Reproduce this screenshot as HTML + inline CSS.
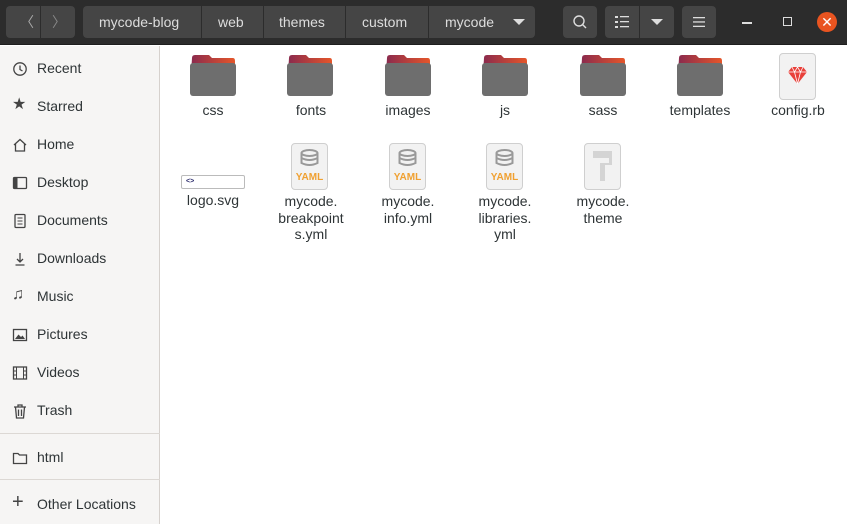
<!DOCTYPE html>
<html><head><style>
*{margin:0;padding:0;box-sizing:border-box}
body{width:847px;height:524px;overflow:hidden;font-family:"Liberation Sans",sans-serif;background:#fff;position:relative;font-size:14px;color:#2e3436}
.hdr{position:absolute;left:0;top:0;width:847px;height:45px;background:#2c2c2c;border-bottom:1px solid #1e1e1e}
.btn{position:absolute;top:6px;height:32px;background:#454545;border-radius:4px;color:#ddd;font-size:14px;line-height:32px;text-align:center}
.seg{position:absolute;top:0;height:32px;border-left:1px solid #2c2c2c}
.side{position:absolute;left:0;top:46px;width:160px;height:478px;background:#f6f5f4;border-right:1px solid #d6d1cd}
.si{position:absolute;left:37px;font-size:14px;color:#2e3436}
.ic{position:absolute;left:12px;width:16px;height:16px}
.sep{position:absolute;left:0;width:160px;height:1px;background:#dcd8d4}
.it{position:absolute;width:96px;text-align:center;font-size:14px;line-height:16.5px;color:#2e3436}
.fold{position:absolute;width:46px;height:42px}
.doc{position:absolute;width:37px;height:47px;border:1px solid #cfcfcf;border-radius:4px;background:#f2f2f2}
</style></head><body>
<div class="hdr">
 <div class="btn" style="left:6px;width:69px"><span style="position:absolute;left:14px;color:#aaa">〈</span><div class="seg" style="left:34px"></div><span style="position:absolute;left:46px;color:#888">〉</span></div>
 <div class="btn" style="left:83px;width:452px">
  <span style="position:absolute;left:16px">mycode-blog</span>
  <div class="seg" style="left:118px"></div><span style="position:absolute;left:135px">web</span>
  <div class="seg" style="left:180px"></div><span style="position:absolute;left:196px">themes</span>
  <div class="seg" style="left:262px"></div><span style="position:absolute;left:279px">custom</span>
  <div class="seg" style="left:345px"></div><span style="position:absolute;left:362px">mycode</span>
  <span style="position:absolute;left:430px;top:13px;width:0;height:0;border-left:6px solid transparent;border-right:6px solid transparent;border-top:6px solid #ddd"></span>
 </div>
 <div class="btn" style="left:563px;width:34px"><svg width="16" height="16" style="margin-top:8px" viewBox="0 0 16 16"><circle cx="7" cy="7" r="5" fill="none" stroke="#ddd" stroke-width="1.4"/><line x1="10.5" y1="10.5" x2="14" y2="14" stroke="#ddd" stroke-width="1.4"/></svg></div>
 <div class="btn" style="left:605px;width:69px"><svg width="14" height="12" style="position:absolute;left:10px;top:10px" viewBox="0 0 14 12"><g fill="#ddd"><rect x="0" y="0" width="3" height="2"/><rect x="0" y="5" width="3" height="2"/><rect x="0" y="10" width="3" height="2"/><rect x="5" y="0" width="9" height="1.3"/><rect x="5" y="5" width="9" height="1.3"/><rect x="5" y="10" width="9" height="1.3"/></g></svg><div class="seg" style="left:34px"></div><span style="position:absolute;left:46px;top:13px;width:0;height:0;border-left:6px solid transparent;border-right:6px solid transparent;border-top:6px solid #ddd"></span></div>
 <div class="btn" style="left:682px;width:34px"><svg width="12" height="10" style="margin-top:11px" viewBox="0 0 12 10"><g fill="#ddd"><rect y="0" width="12" height="1.3"/><rect y="4.3" width="12" height="1.3"/><rect y="8.7" width="12" height="1.3"/></g></svg></div>
 <div style="position:absolute;left:742px;top:22px;width:10px;height:1.5px;background:#ddd"></div>
 <div style="position:absolute;left:783px;top:17px;width:9px;height:9px;border:1.3px solid #ddd"></div>
 <div style="position:absolute;left:817px;top:12px;width:20px;height:20px;border-radius:50%;background:#e95420;color:#fff;text-align:center;line-height:20px;font-size:14px">✕</div>
</div>
<div class="side">
 <svg class="ic" style="top:15px" viewBox="0 0 16 16"><circle cx="8" cy="8" r="6.2" fill="none" stroke="#444" stroke-width="1.3"/><path d="M8 4.5V8.5L10.5 10" fill="none" stroke="#444" stroke-width="1.3"/></svg><div class="si" style="top:14px">Recent</div>
 <div class="ic" style="top:51px;font-size:16px;line-height:16px;color:#444">★</div><div class="si" style="top:52px">Starred</div>
 <svg class="ic" style="top:91px" viewBox="0 0 16 16"><path d="M2 8L8 2.5L14 8M3.5 7V14H12.5V7" fill="none" stroke="#444" stroke-width="1.3"/></svg><div class="si" style="top:90px">Home</div>
 <svg class="ic" style="top:129px" viewBox="0 0 16 16"><rect x="1.5" y="2.5" width="13" height="11" rx="1" fill="none" stroke="#444" stroke-width="1.3"/><rect x="1.5" y="2.5" width="4" height="11" fill="#444"/></svg><div class="si" style="top:128px">Desktop</div>
 <svg class="ic" style="top:167px" viewBox="0 0 16 16"><rect x="3" y="1.5" width="10" height="13" rx="1" fill="none" stroke="#444" stroke-width="1.3"/><path d="M5.5 5h5M5.5 8h5M5.5 11h5" stroke="#444"/></svg><div class="si" style="top:166px">Documents</div>
 <svg class="ic" style="top:205px" viewBox="0 0 16 16"><path d="M8 2V11M5 8L8 11L11 8M3.5 14H12.5" fill="none" stroke="#444" stroke-width="1.3"/></svg><div class="si" style="top:204px">Downloads</div>
 <div class="ic" style="top:241px;font-size:16px;line-height:16px;color:#444">♫</div><div class="si" style="top:242px">Music</div>
 <svg class="ic" style="top:281px" viewBox="0 0 16 16"><rect x="1.5" y="2.5" width="13" height="11" fill="none" stroke="#444" stroke-width="1.3"/><path d="M3 12L6.5 7.5L9 10L10.5 8.5L13 12Z" fill="#444"/></svg><div class="si" style="top:280px">Pictures</div>
 <svg class="ic" style="top:319px" viewBox="0 0 16 16"><rect x="1.5" y="2" width="13" height="12" fill="none" stroke="#444" stroke-width="1.3"/><path d="M4.5 2V14M11.5 2V14M1.5 6h3M1.5 10h3M11.5 6h3M11.5 10h3" stroke="#444"/></svg><div class="si" style="top:318px">Videos</div>
 <svg class="ic" style="top:357px" viewBox="0 0 16 16"><path d="M2 4H14M6 4V2H10V4M3.5 4L4.5 15H11.5L12.5 4M6.5 6.5V13M9.5 6.5V13" fill="none" stroke="#444" stroke-width="1.3"/></svg><div class="si" style="top:356px">Trash</div>
 <div class="sep" style="top:387px"></div>
 <svg class="ic" style="top:404px" viewBox="0 0 16 16"><path d="M1.5 3.5H6L7.5 5H14.5V13.5H1.5Z" fill="none" stroke="#444" stroke-width="1.3"/></svg><div class="si" style="top:403px">html</div>
 <div class="sep" style="top:433px"></div>
 <div class="ic" style="top:448px;font-size:20px;line-height:16px;color:#444">+</div><div class="si" style="top:450px">Other Locations</div>
</div>
<svg width="0" height="0" style="position:absolute"><defs><linearGradient id="g" x1="0" x2="1"><stop offset="0" stop-color="#8a2a4e"/><stop offset="1" stop-color="#e5562a"/></linearGradient></defs></svg>
<!-- folders -->
<div id="f"></div>
<script></script>
<svg class="fold" style="left:190px;top:54px" viewBox="0 0 46 42"><path d="M2 4Q2 1 5 1H19L22 4H43Q45 4 45 7V20H1Z" fill="url(#g)"/><rect x="0" y="9" width="46" height="33" rx="3" fill="#6e6e6e"/></svg>
<svg class="fold" style="left:287px;top:54px" viewBox="0 0 46 42"><path d="M2 4Q2 1 5 1H19L22 4H43Q45 4 45 7V20H1Z" fill="url(#g)"/><rect x="0" y="9" width="46" height="33" rx="3" fill="#6e6e6e"/></svg>
<svg class="fold" style="left:385px;top:54px" viewBox="0 0 46 42"><path d="M2 4Q2 1 5 1H19L22 4H43Q45 4 45 7V20H1Z" fill="url(#g)"/><rect x="0" y="9" width="46" height="33" rx="3" fill="#6e6e6e"/></svg>
<svg class="fold" style="left:482px;top:54px" viewBox="0 0 46 42"><path d="M2 4Q2 1 5 1H19L22 4H43Q45 4 45 7V20H1Z" fill="url(#g)"/><rect x="0" y="9" width="46" height="33" rx="3" fill="#6e6e6e"/></svg>
<svg class="fold" style="left:580px;top:54px" viewBox="0 0 46 42"><path d="M2 4Q2 1 5 1H19L22 4H43Q45 4 45 7V20H1Z" fill="url(#g)"/><rect x="0" y="9" width="46" height="33" rx="3" fill="#6e6e6e"/></svg>
<svg class="fold" style="left:677px;top:54px" viewBox="0 0 46 42"><path d="M2 4Q2 1 5 1H19L22 4H43Q45 4 45 7V20H1Z" fill="url(#g)"/><rect x="0" y="9" width="46" height="33" rx="3" fill="#6e6e6e"/></svg>
<div class="doc" style="left:779px;top:53px"><svg width="35" height="45" viewBox="0 0 35 45"><path d="M8 18L12 13H23L27 18L17.5 30Z" fill="#e8403a"/><path d="M8 18H27M12 13L14.5 18L17.5 30L20.5 18L23 13M14.5 18L17.5 13L20.5 18" fill="none" stroke="#fff" stroke-width="0.8"/></svg></div>
<div class="it" style="left:165px;top:102px">css</div>
<div class="it" style="left:263px;top:102px">fonts</div>
<div class="it" style="left:360px;top:102px">images</div>
<div class="it" style="left:457px;top:102px">js</div>
<div class="it" style="left:555px;top:102px">sass</div>
<div class="it" style="left:652px;top:102px">templates</div>
<div class="it" style="left:750px;top:102px">config.rb</div>
<!-- row 2 -->
<div style="position:absolute;left:181px;top:175px;width:64px;height:14px;border:1px solid #bbb;border-radius:2px;background:#fff;font-size:7px;color:#226;padding-left:4px;line-height:12px;font-weight:bold">&lt;&gt;</div>
<div class="it" style="left:165px;top:192px">logo.svg</div>
<div class="doc" style="left:291px;top:143px"><svg width="35" height="45" viewBox="0 0 35 45"><g fill="none" stroke="#999" stroke-width="2"><ellipse cx="17.5" cy="9" rx="8" ry="3"/><path d="M9.5 9V19Q17.5 23 25.5 19V9M9.5 14Q17.5 18 25.5 14"/></g><text x="17.5" y="36" text-anchor="middle" font-size="10" font-weight="bold" fill="#f0a030" font-family="Liberation Sans">YAML</text></svg></div>
<div class="doc" style="left:389px;top:143px"><svg width="35" height="45" viewBox="0 0 35 45"><g fill="none" stroke="#999" stroke-width="2"><ellipse cx="17.5" cy="9" rx="8" ry="3"/><path d="M9.5 9V19Q17.5 23 25.5 19V9M9.5 14Q17.5 18 25.5 14"/></g><text x="17.5" y="36" text-anchor="middle" font-size="10" font-weight="bold" fill="#f0a030" font-family="Liberation Sans">YAML</text></svg></div>
<div class="doc" style="left:486px;top:143px"><svg width="35" height="45" viewBox="0 0 35 45"><g fill="none" stroke="#999" stroke-width="2"><ellipse cx="17.5" cy="9" rx="8" ry="3"/><path d="M9.5 9V19Q17.5 23 25.5 19V9M9.5 14Q17.5 18 25.5 14"/></g><text x="17.5" y="36" text-anchor="middle" font-size="10" font-weight="bold" fill="#f0a030" font-family="Liberation Sans">YAML</text></svg></div>
<div class="doc" style="left:584px;top:143px"><svg width="35" height="45" viewBox="0 0 35 45"><g fill="#d4d4d4"><rect x="8" y="7" width="19" height="7"/><rect x="24" y="14" width="3" height="6"/><rect x="15" y="19" width="12" height="2"/><rect x="15" y="21" width="5" height="16"/></g></svg></div>
<div class="it" style="left:263px;top:193px">mycode.<br>breakpoint<br>s.yml</div>
<div class="it" style="left:360px;top:193px">mycode.<br>info.yml</div>
<div class="it" style="left:457px;top:193px">mycode.<br>libraries.<br>yml</div>
<div class="it" style="left:555px;top:193px">mycode.<br>theme</div>
</body></html>
